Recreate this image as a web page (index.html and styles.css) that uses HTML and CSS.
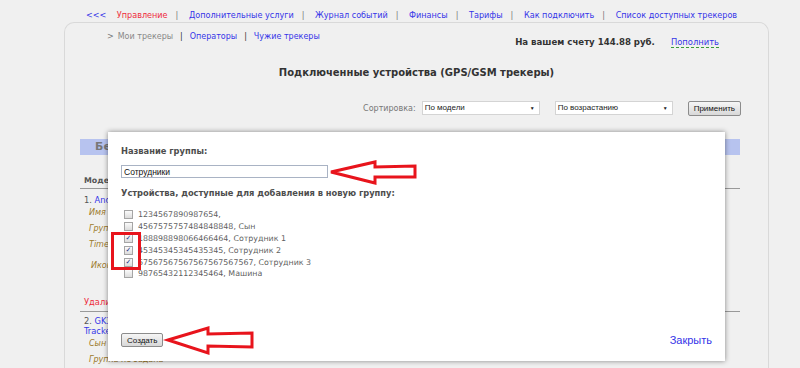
FILE: index.html
```html
<!DOCTYPE html>
<html lang="ru">
<head>
  <meta charset="UTF-8">
  <title>Мои трекеры</title>
  <link rel="stylesheet" href="styles.css">
</head>
<body>
  <div class="topnav">
    <a href="#" class="back">&lt;&lt;&lt;</a>
    <a href="#" class="current">Управление</a><span class="sep">|</span>
    <a href="#">Дополнительные услуги</a><span class="sep">|</span>
    <a href="#">Журнал событий</a><span class="sep">|</span>
    <a href="#">Финансы</a><span class="sep">|</span>
    <a href="#">Тарифы</a><span class="sep">|</span>
    <a href="#">Как подключить</a><span class="sep">|</span>
    <a href="#">Список доступных трекеров</a>
  </div>

  <div class="panel">
    <div class="panel-head">
      <div class="subnav">
        <span class="gt">&gt;</span><span class="here">Мои трекеры</span><span class="sep">|</span><a href="#">Операторы</a><span class="sep">|</span><a href="#">Чужие трекеры</a>
      </div>
      <div class="balance">На вашем счету 144.88 руб. <a href="#" class="topup">Пополнить</a></div>
    </div>

    <h1>Подключенные устройства (GPS/GSM трекеры)</h1>

    <div class="sort-row">
      <span class="sort-label">Сортировка:</span>
      <span class="select">По модели<i>&#9660;</i></span>
      <span class="select">По возрастанию<i>&#9660;</i></span>
      <button class="btn">Применить</button>
    </div>

    <div class="content">
      <div class="group-bar">Без группы</div>
      <div class="col-head">Модель</div>
      <div class="device">
        <div class="dev-name single">1. <a href="#">Android телефон</a></div>
        <div class="dev-prop">Имя не задано</div>
        <div class="dev-prop">Группа не задана</div>
        <div class="dev-prop">TimeZone: +4</div>
        <div class="dev-prop icon-row">Иконка</div>
        <div class="dev-del">Удалить</div>
      </div>
      <div class="device">
        <div class="dev-name">2. <a href="#">GK301 GPS Tracker</a></div>
        <div class="dev-prop">Сын</div>
        <div class="dev-prop">Группа не задана</div>
      </div>
    </div>
  </div>

  <div class="modal">
    <div class="modal-label">Название группы:</div>
    <input class="group-input" type="text" value="Сотрудники">
    <div class="modal-label list-label">Устройства, доступные для добавления в новую группу:</div>
    <div class="dev-list">
      <div class="dev-row"><span class="cb"></span>1234567890987654,</div>
      <div class="dev-row"><span class="cb"></span>4567575757484848848, Сын</div>
      <div class="dev-row"><span class="cb checked">&#10003;</span>188898898066466464, Сотрудник 1</div>
      <div class="dev-row"><span class="cb checked">&#10003;</span>45345345345435345, Сотрудник 2</div>
      <div class="dev-row"><span class="cb checked">&#10003;</span>67567567567567567567567, Сотрудник 3</div>
      <div class="dev-row"><span class="cb"></span>98765432112345464, Машина</div>
    </div>
    <div class="modal-foot">
      <button class="btn">Создать</button>
      <a href="#" class="close">Закрыть</a>
    </div>

    <!-- annotation marks -->
    <div class="mark-box"></div>
    <svg class="arrow arrow-input" width="100" height="30" viewBox="0 0 100 30">
      <polygon points="2,12 46,2 46,7 86,6 86,17 46,17 46,23" />
    </svg>
    <svg class="arrow arrow-btn" width="100" height="34" viewBox="0 0 100 34">
      <polygon points="2,14 42,2 42,8 86,7 86,21 42,20 42,27" />
    </svg>
  </div>
</body>
</html>
```

FILE: styles.css
```css
body {
  margin: 0;
  background: #f0f0f0;
  font-family: "DejaVu Sans", Verdana, sans-serif;
  font-size: 7.9px;
  color: #555;
  width: 800px;
  height: 368px;
  overflow: hidden;
}
a {
  color: #3535e8;
  text-decoration: none;
}
.topnav {
  height: 22px;
  box-sizing: border-box;
  padding: 10px 0 0 23px;
  text-align: center;
  font-size: 8.1px;
  line-height: 10px;
  white-space: nowrap;
}
.topnav .back {
  margin-right: 8px;
}
.topnav .current {
  color: #ee2b3b;
}
.sep {
  color: #777;
  margin: 0 8px;
}
.panel {
  margin: 0 31px 0 64px;
  height: 346px;
  border: 1px solid #d9d9d9;
  border-bottom: none;
  border-radius: 10px 10px 0 0;
  box-sizing: border-box;
}
.panel-head {
  display: flex;
  justify-content: space-between;
  padding: 9px 49px 0 42px;
  height: 32px;
  box-sizing: border-box;
}
.subnav {
  font-size: 8px;
  line-height: 10px;
}
.subnav .gt {
  color: #777;
  margin-right: 4px;
}
.subnav .here {
  color: #888;
}
.subnav .sep {
  margin: 0 7px;
  color: #333;
}
.balance {
  font-size: 8.6px;
  font-weight: bold;
  color: #333;
  line-height: 10px;
  padding-top: 5px;
}
.topup {
  font-weight: normal;
  font-size: 8.4px;
  margin-left: 13px;
  border-bottom: 1px dashed #3a9a3a;
}
h1 {
  margin: 12px 0 0;
  text-align: center;
  font-size: 10px;
  line-height: 12px;
  color: #333;
}
.sort-row {
  display: flex;
  justify-content: flex-end;
  align-items: center;
  gap: 6px;
  margin-top: 21px;
  padding-right: 27px;
  height: 16px;
}
.sort-label {
  color: #777;
  font-size: 8px;
}
.select {
  position: relative;
  width: 118px;
  height: 14px;
  box-sizing: border-box;
  background: #fff;
  border: 1px solid #d4d4d4;
  padding-left: 2px;
  line-height: 12px;
  color: #222;
  font-family: "Liberation Sans", Arial, sans-serif;
  font-size: 8px;
}
.select + .select {
  margin-left: 9px;
}
.select i {
  position: absolute;
  right: 4px;
  top: 0;
  font-style: normal;
  font-size: 5px;
}
.btn {
  height: 15px;
  padding: 0 5px;
  border: 1px solid #8c8c8c;
  border-radius: 2px;
  background: linear-gradient(#f6f6f6, #d8d8d8);
  font-family: "Liberation Sans", Arial, sans-serif;
  font-size: 8px;
  color: #111;
  line-height: 13px;
}
.sort-row .btn {
  margin-left: 9px;
}
.content {
  margin: 23px 28px 0 15px;
}
.group-bar {
  height: 16px;
  background: #b7c3ef;
  padding-left: 15px;
  font-size: 11px;
  font-weight: bold;
  color: #777;
  line-height: 16px;
}
.col-head {
  margin-top: 21px;
  padding: 0 0 3px 4px;
  font-weight: bold;
  border-bottom: 1px solid #999;
  line-height: 9px;
}
.device {
  width: 70px;
  padding: 6px 0 0 4px;
  line-height: 10px;
}
.device + .device {
  border-top: 1px solid #999;
  margin-top: 4px;
  padding-top: 4px;
  width: auto;
}
.device + .device .dev-name {
  width: 70px;
}
.dev-name {
  color: #555;
  font-size: 8.3px;
}
.dev-name.single {
  white-space: nowrap;
}
.dev-prop {
  margin: 6px 0 0 5px;
  font-style: italic;
  color: #9c7a2a;
  font-size: 8px;
  white-space: nowrap;
}
.dev-name + .dev-prop {
  margin-top: 3px;
}
.icon-row {
  margin: 11px 0 0 7px;
}
.dev-del {
  margin-top: 26px;
  color: #ee2b3b;
  font-size: 8.3px;
}
.modal {
  position: absolute;
  left: 108px;
  top: 132px;
  width: 617px;
  height: 229px;
  box-sizing: border-box;
  padding: 0 13px 14px;
  background: #fff;
  box-shadow: 0 0 5px rgba(0, 0, 0, 0.45);
  display: flex;
  flex-direction: column;
  align-items: flex-start;
}
.modal-label {
  margin-top: 15px;
  font-size: 8.3px;
  font-weight: bold;
  color: #4d4d4d;
  line-height: 9px;
}
.group-input {
  margin-top: 9px;
  width: 207px;
  height: 13px;
  box-sizing: border-box;
  border: 1px solid #a9b3c4;
  padding: 0 2px;
  font-family: "Liberation Sans", Arial, sans-serif;
  font-size: 8.5px;
  color: #111;
}
.list-label {
  margin-top: 11px;
}
.dev-list {
  margin-top: 11px;
  padding-left: 3px;
}
.dev-row {
  display: flex;
  align-items: center;
  height: 11.8px;
  color: #5f5f5f;
}
.cb {
  width: 9px;
  height: 9px;
  box-sizing: border-box;
  overflow: hidden;
  margin-right: 5px;
  border: 1px solid #a5a5a5;
  background: linear-gradient(#fbfbfb, #dcdcdc);
  font-size: 7px;
  line-height: 7px;
  text-align: center;
  color: #23328a;
}
.modal-foot {
  margin-top: auto;
  align-self: stretch;
  display: flex;
  justify-content: space-between;
  align-items: center;
}
.modal-foot .btn {
  height: 14px;
  padding: 0 5px;
}
.close {
  font-family: "Liberation Sans", Arial, sans-serif;
  font-size: 11px;
}
.mark-box {
  position: absolute;
  left: 3px;
  top: 100px;
  width: 30px;
  height: 38px;
  box-sizing: border-box;
  border: 3px solid #e8141c;
}
.arrow {
  position: absolute;
  overflow: visible;
}
.arrow polygon {
  fill: none;
  stroke: #e8141c;
  stroke-width: 3;
  stroke-linejoin: miter;
}
.arrow-input {
  left: 221px;
  top: 28px;
}
.arrow-btn {
  left: 58px;
  top: 194px;
}
```
